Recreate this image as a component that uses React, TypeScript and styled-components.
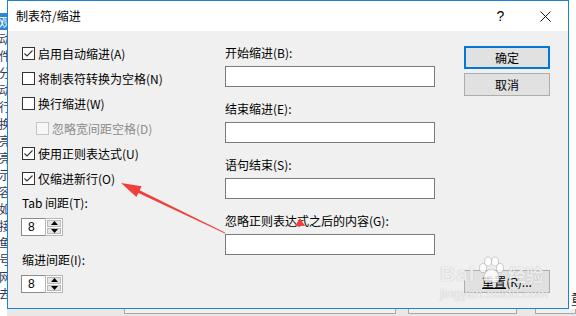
import React from 'react';
import styled, { createGlobalStyle } from 'styled-components';

const UI_FONT = `"Noto Sans CJK SC", "Noto Sans", sans-serif`;

const GlobalStyle = createGlobalStyle`
  html, body { margin: 0; padding: 0; width: 576px; height: 316px; overflow: hidden; background: #fff; }
  body { font-family: ${UI_FONT}; font-size: 12px; color: #000; }
`;

const Screen = styled.div`
  position: relative;
  width: 576px;
  height: 316px;
  display: grid;
  grid-template-columns: 7px 562px 7px;
  grid-template-rows: 309px 7px;
  overflow: hidden;
  font-family: ${UI_FONT};
`;

/* background window peeking out on the left */
const LeftStrip = styled.div`
  grid-column: 1;
  grid-row: 1 / 3;
  overflow: hidden;
  background: #fff;
  display: flex;
  flex-direction: column;
  padding-top: 13px;
`;

const StripChar = styled.div<{ $active?: boolean }>`
  height: 17px;
  line-height: 17px;
  font-size: 12px;
  margin-left: -1px;
  white-space: nowrap;
  color: ${({ $active }) => ($active ? '#fff' : '#2b3a55')};
  background: ${({ $active }) => ($active ? '#2f86d6' : 'transparent')};
`;

const RightStrip = styled.div`
  grid-column: 3;
  grid-row: 1;
  background: #fff;
  display: flex;
  flex-direction: column;
  justify-content: flex-end;
  overflow: hidden;
`;

const RightChar = styled.div`
  font-size: 13px;
  line-height: 18px;
  margin-left: 2px;
  margin-bottom: 1px;
  white-space: nowrap;
  color: #222;
`;

const BottomStrip = styled.div`
  grid-column: 2 / 4;
  grid-row: 2;
  background: #e8e8e8;
  display: flex;
  align-items: flex-start;
`;

const BottomBox = styled.div<{ $x: number; $w: number }>`
  margin-left: ${({ $x }) => $x}px;
  width: ${({ $w }) => $w}px;
  height: 4px;
  border: 1px solid #a8a8a8;
  border-top: none;
  background: #f0f0f0;
`;

const Dialog = styled.div`
  grid-column: 2;
  grid-row: 1;
  box-sizing: border-box;
  border: 1px solid #1a82d8;
  display: flex;
  flex-direction: column;
  background: #f0f0f0;
`;

const TitleBar = styled.div`
  height: 30px;
  background: #fff;
  display: flex;
  align-items: center;
  padding-left: 8px;
`;

const TitleText = styled.div`
  flex: 1;
  font-size: 12px;
  line-height: 30px;
  color: #000;
`;

const TitleButton = styled.div`
  width: 45px;
  height: 30px;
  display: flex;
  align-items: center;
  justify-content: center;
  font-family: "Liberation Sans", sans-serif;
  font-size: 14px;
  color: #000;
`;

const Body = styled.div`
  flex: 1;
  display: flex;
  padding: 10px 0 10px 14px;
`;

const LeftCol = styled.div`
  width: 203px;
  display: flex;
  flex-direction: column;
`;

const MidCol = styled.div`
  width: 210px;
  display: flex;
  flex-direction: column;
`;

const RightCol = styled.div`
  width: 86px;
  margin-left: 29px;
  display: flex;
  flex-direction: column;
  gap: 4px;
  padding: 5px 0;
`;

const CheckRow = styled.div<{ $indent?: number; $disabled?: boolean }>`
  height: 25px;
  display: flex;
  align-items: center;
  padding-left: ${({ $indent }) => $indent || 0}px;
  color: ${({ $disabled }) => ($disabled ? '#8c8c8c' : '#000')};
  white-space: nowrap;
`;

const Box = styled.div<{ $disabled?: boolean }>`
  width: 13px;
  height: 13px;
  box-sizing: border-box;
  border: 1px solid ${({ $disabled }) => ($disabled ? '#c6c6c6' : '#333')};
  background: ${({ $disabled }) => ($disabled ? '#f7f7f7' : '#fff')};
  margin-right: 3px;
  display: flex;
  align-items: center;
  justify-content: center;
`;

const Label = styled.div`
  height: 24px;
  line-height: 24px;
  white-space: nowrap;
`;

const SpinLabel = styled(Label)<{ $gap?: number }>`
  margin-top: ${({ $gap }) => $gap || 0}px;
`;

const Spin = styled.div`
  margin-top: 3px;
  margin-left: -1px;
  width: 42px;
  height: 18px;
  display: flex;
  box-sizing: border-box;
`;

const SpinValue = styled.div`
  width: 24px;
  box-sizing: border-box;
  border: 1px solid #8a8a8a;
  border-right: none;
  background: #fff;
  font-family: "Liberation Sans", sans-serif;
  font-size: 12px;
  line-height: 16px;
  padding-left: 6px;
`;

const SpinButtons = styled.div`
  width: 18px;
  display: flex;
  flex-direction: column;
  box-sizing: border-box;
  border: 1px solid #b5b5b5;
  background: #fff;
  padding: 1px;
  gap: 1px;
`;

const SpinArrow = styled.div`
  flex: 1;
  background: #e4e4e4;
  border: 1px solid #b9b9b9;
  display: flex;
  align-items: center;
  justify-content: center;
`;

const Field = styled.div`
  display: flex;
  flex-direction: column;
  margin-bottom: 10px;
`;

const TextInput = styled.div`
  margin-top: 1px;
  height: 21px;
  box-sizing: border-box;
  border: 1px solid #7a7a7a;
  background: #fff;
`;

const Button = styled.div<{ $primary?: boolean; $push?: boolean }>`
  height: 23px;
  box-sizing: border-box;
  border: ${({ $primary }) => ($primary ? '2px solid #0078d7' : '1px solid #adadad')};
  background: #e1e1e1;
  display: flex;
  align-items: center;
  justify-content: center;
  font-size: 12px;
  margin-top: ${({ $push }) => ($push ? 'auto' : '0')};
`;

const Underlined = styled.span`
  text-decoration: underline;
`;

const Overlay = styled.svg`
  position: absolute;
  left: 0;
  top: 0;
  pointer-events: none;
`;

const Watermark = styled.div`
  position: absolute;
  left: 440px;
  top: 252px;
  display: flex;
  flex-direction: column;
  pointer-events: none;
  color: rgba(255, 255, 255, 0.78);
  text-shadow: 0 0 1px rgba(120, 120, 120, 0.55);
`;

const WmTop = styled.div`
  display: flex;
  align-items: flex-end;
  height: 34px;
`;

const WmBai = styled.span`
  font-family: "Liberation Sans", sans-serif;
  font-weight: bold;
  font-size: 21px;
  line-height: 24px;
  letter-spacing: 1px;
`;

const WmJy = styled.span`
  font-size: 18px;
  line-height: 24px;
  font-weight: bold;
  margin-left: 2px;
`;

const WmUrl = styled.div`
  font-family: "Liberation Sans", sans-serif;
  font-size: 13px;
  line-height: 14px;
  margin-top: 1px;
  letter-spacing: 0.2px;
`;

const Check = () => (
  <svg width="11" height="11" viewBox="0 0 11 11">
    <polyline points="1.5,5.5 4,8 9.5,2.5" fill="none" stroke="#333" strokeWidth="1.1" />
  </svg>
);

const Tri = ({ up }: { up?: boolean }) => (
  <svg width="7" height="4" viewBox="0 0 7 4">
    <polygon points={up ? '0,4 3.5,0 7,4' : '0,0 3.5,4 7,0'} fill="#000" />
  </svg>
);

const Paw = () => (
  <svg width="30" height="30" viewBox="0 0 30 30">
    <g fill="rgba(255,255,255,0.8)" stroke="rgba(130,130,130,0.45)" strokeWidth="0.8">
      <ellipse cx="7" cy="12" rx="3.5" ry="4.5" />
      <ellipse cx="12" cy="5.5" rx="3.5" ry="4.5" />
      <ellipse cx="19" cy="5.5" rx="3.5" ry="4.5" />
      <ellipse cx="24" cy="12" rx="3.5" ry="4.5" />
      <path d="M15.5 13 C10 13 7 20 8 24 C9 28 13 26 15.5 26 C18 26 22 28 23 24 C24 20 21 13 15.5 13 Z" />
    </g>
  </svg>
);

const CheckItem = ({ text, checked, disabled, indent }: { text: string; checked?: boolean; disabled?: boolean; indent?: number }) => (
  <CheckRow $indent={indent} $disabled={disabled}>
    <Box $disabled={disabled}>{checked && <Check />}</Box>
    {text}
  </CheckRow>
);

const Spinner = ({ value }: { value: string }) => (
  <Spin>
    <SpinValue>{value}</SpinValue>
    <SpinButtons>
      <SpinArrow><Tri up /></SpinArrow>
      <SpinArrow><Tri /></SpinArrow>
    </SpinButtons>
  </Spin>
);

const stripChars = ['观', '动', '件', '分', '动', '行', '换', '亮', '亮', '示', '容', '如', '接', '鱼', '号', '网', '去'];

const fields = ['开始缩进(B):', '结束缩进(E):', '语句结束(S):', '忽略正则表达式之后的内容(G):'];

export default function App() {
  return (
    <>
      <GlobalStyle />
      <Screen>
        <LeftStrip>
          {stripChars.map((c, i) => (
            <StripChar key={i} $active={i === 0}>{c}</StripChar>
          ))}
        </LeftStrip>

        <Dialog>
          <TitleBar>
            <TitleText>制表符/缩进</TitleText>
            <TitleButton>?</TitleButton>
            <TitleButton>
              <svg width="11" height="11" viewBox="0 0 11 11">
                <path d="M0.5 0.5 L10.5 10.5 M10.5 0.5 L0.5 10.5" stroke="#111" strokeWidth="1" />
              </svg>
            </TitleButton>
          </TitleBar>
          <Body>
            <LeftCol>
              <CheckItem text="启用自动缩进(A)" checked />
              <CheckItem text="将制表符转换为空格(N)" />
              <CheckItem text="换行缩进(W)" />
              <CheckItem text="忽略宽间距空格(D)" disabled indent={14} />
              <CheckItem text="使用正则表达式(U)" checked />
              <CheckItem text="仅缩进新行(O)" checked />
              <SpinLabel>Tab 间距(T):</SpinLabel>
              <Spinner value="8" />
              <SpinLabel $gap={12}>缩进间距(I):</SpinLabel>
              <Spinner value="8" />
            </LeftCol>
            <MidCol>
              {fields.map(f => (
                <Field key={f}>
                  <Label>{f}</Label>
                  <TextInput />
                </Field>
              ))}
            </MidCol>
            <RightCol>
              <Button $primary>确定</Button>
              <Button>取消</Button>
              <Button $push><Underlined>重置</Underlined>(R)...</Button>
            </RightCol>
          </Body>
        </Dialog>

        <RightStrip>
          <RightChar>重</RightChar>
        </RightStrip>

        <BottomStrip>
          <BottomBox $x={117} $w={280} />
          <BottomBox $x={12} $w={111} />
          <BottomBox $x={18} $w={40} />
        </BottomStrip>

        <Overlay width="576" height="316" viewBox="0 0 576 316">
          <polygon
            points="225,233.4 225,232.6 139.6,190.3 141.6,186.3 121,183 136.4,197.1 138.4,193.1"
            fill="#f0403e"
          />
          <polygon points="295,226 300,218 305,226" fill="#f0403e" />
        </Overlay>

        <Watermark>
          <WmTop>
            <WmBai>Bai</WmBai>
            <Paw />
            <WmJy>经验</WmJy>
          </WmTop>
          <WmUrl>jingyan.baidu.com</WmUrl>
        </Watermark>
      </Screen>
    </>
  );
}
